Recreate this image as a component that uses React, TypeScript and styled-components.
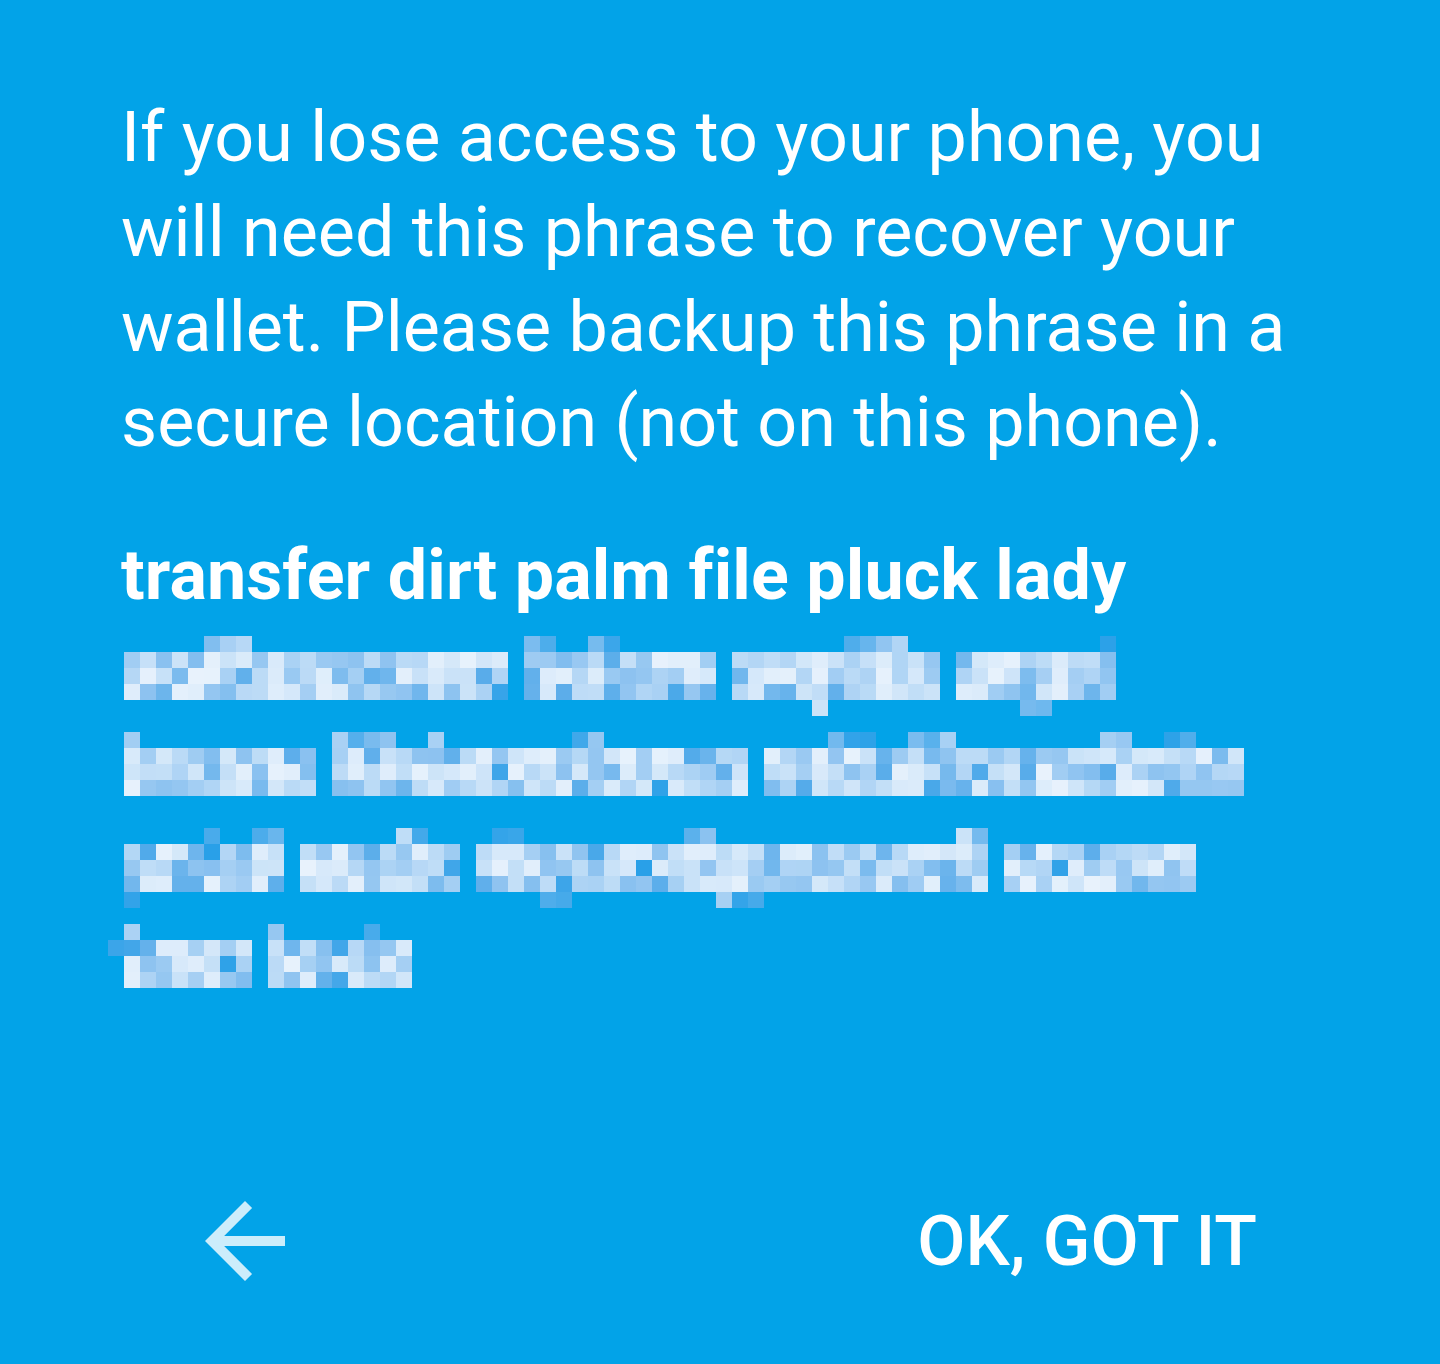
import React from "react";
import styled, { createGlobalStyle } from "styled-components";

const GlobalStyle = createGlobalStyle`
  html, body { margin: 0; padding: 0; background: #02a3e8; }
  * { box-sizing: border-box; }
`;

const Page = styled.div`
  min-height: 1364px;
  display: flex;
  flex-direction: column;
  background: #02a3e8;
  color: #ffffff;
  font-family: Roboto, "Noto Sans", "Liberation Sans", sans-serif;
`;

const Content = styled.main`
  flex: 1;
  padding: 90px 111px 0 121px;
`;

const Intro = styled.p`
  margin: 0;
  font-size: 70px;
  line-height: 95px;
  font-weight: 400;
`;

const Phrase = styled.section`
  margin-top: 57px;
`;

const PhraseLine = styled.p`
  margin: 0;
  font-size: 70px;
  line-height: 96px;
  font-weight: 700;
  letter-spacing: 0.1px;
`;

const Mosaic = styled.svg`
  display: block;
  margin-left: -13px;
  width: 1168px;
  height: 380px;
  shape-rendering: crispEdges;
`;

const Footer = styled.footer`
  display: flex;
  justify-content: space-between;
  align-items: center;
  padding: 0 183px 63px 185px;
`;

const BackButton = styled.button`
  width: 120px;
  height: 120px;
  padding: 0;
  border: none;
  background: transparent;
  display: flex;
  align-items: center;
  justify-content: center;
  cursor: pointer;
`;

const OkButton = styled.button`
  border: none;
  background: transparent;
  padding: 0;
  color: #ffffff;
  font-family: Roboto, "Noto Sans", "Liberation Sans", sans-serif;
  font-size: 70px;
  line-height: 82px;
  font-weight: 500;
  cursor: pointer;
`;

/* ---------- mosaic (pixelated hidden words) ---------- */

type MosaicLine = {
  main: [number, number][];
  asc: number[];
  desc: number[];
  partial?: number[]; // cells only in first main row
};

const LINES: MosaicLine[] = [
  {
    main: [
      [0, 24],
      [25, 37],
      [38, 51],
      [52, 62],
    ],
    asc: [5, 6, 7, 25, 26, 29, 30, 45, 46, 47, 48, 61],
    desc: [43, 56, 57],
  },
  {
    main: [
      [0, 12],
      [13, 39],
      [40, 70],
    ],
    asc: [0, 13, 14, 15, 16, 19, 28, 29, 44, 45, 46, 49, 50, 51, 61, 62, 65, 66],
    desc: [],
  },
  {
    main: [
      [0, 10],
      [11, 21],
      [22, 54],
      [55, 67],
    ],
    asc: [5, 8, 9, 17, 18, 23, 24, 35, 36, 52, 53],
    desc: [0, 26, 27, 37, 38, 39],
  },
  {
    main: [
      [0, 8],
      [9, 18],
    ],
    asc: [0, 9, 15],
    desc: [],
    partial: [-1],
  },
];

function mulberry32(seed: number) {
  let a = seed;
  return () => {
    a |= 0;
    a = (a + 0x6d2b79f5) | 0;
    let t = Math.imul(a ^ (a >>> 15), 1 | a);
    t = (t + Math.imul(t ^ (t >>> 7), 61 | t)) ^ t;
    return ((t ^ (t >>> 14)) >>> 0) / 4294967296;
  };
}

type RGB = [number, number, number];
const LIGHT: RGB = [232, 242, 252];
const MID: RGB = [140, 194, 240];
const DEEP: RGB = [88, 172, 234];
const EDGE: RGB = [40, 160, 232];

const mix = (a: RGB, b: RGB, t: number) =>
  `rgb(${Math.round(a[0] + (b[0] - a[0]) * t)},${Math.round(
    a[1] + (b[1] - a[1]) * t
  )},${Math.round(a[2] + (b[2] - a[2]) * t)})`;

type Cell = { x: number; y: number; fill: string };

function buildCells(): Cell[] {
  const rnd = mulberry32(20240611);
  const cells: Cell[] = [];
  const colX = (i: number) => (i + 1) * 16;
  const rowY = (line: number, r: number) => 13 + line * 96 + r * 16;

  const mainColor = () => {
    const p = rnd();
    if (p < 0.12) return mix(MID, DEEP, rnd());
    if (p < 0.16) return mix(DEEP, EDGE, rnd());
    return mix(LIGHT, MID, Math.pow(rnd(), 1.1));
  };
  const edgeColor = () => {
    const p = rnd();
    if (p < 0.35) return mix(LIGHT, MID, 0.3 + rnd() * 0.7);
    return mix(MID, EDGE, rnd());
  };

  LINES.forEach((ln, li) => {
    ln.asc.forEach((c) =>
      cells.push({ x: colX(c), y: rowY(li, 0), fill: edgeColor() })
    );
    ln.main.forEach(([s, e]) => {
      for (let r = 1; r <= 3; r++) {
        for (let c = s; c < e; c++) {
          cells.push({ x: colX(c), y: rowY(li, r), fill: mainColor() });
        }
      }
    });
    ln.desc.forEach((c) =>
      cells.push({ x: colX(c), y: rowY(li, 4), fill: edgeColor() })
    );
    (ln.partial || []).forEach((c) =>
      cells.push({ x: colX(c), y: rowY(li, 1), fill: mix(DEEP, EDGE, 0.6) })
    );
  });
  return cells;
}

const CELLS = buildCells();

function HiddenWords() {
  return (
    <Mosaic viewBox="0 0 1168 380" aria-label="hidden recovery words">
      {CELLS.map((c, i) => (
        <rect key={i} x={c.x} y={c.y} width={16} height={16} fill={c.fill} />
      ))}
    </Mosaic>
  );
}

function ArrowBack() {
  return (
    <svg width="120" height="120" viewBox="0 0 24 24" aria-hidden="true">
      <path
        d="M20 11H7.83l5.59-5.59L12 4l-8 8 8 8 1.41-1.41L7.83 13H20v-2z"
        fill="#ffffff"
        fillOpacity={0.8}
      />
    </svg>
  );
}

export default function App() {
  return (
    <>
      <GlobalStyle />
      <Page>
        <Content>
          <Intro>
            If you lose access to your phone, you will need this phrase to
            recover your wallet. Please backup this phrase in a secure location
            (not on this phone).
          </Intro>
          <Phrase>
            <PhraseLine>transfer dirt palm file pluck lady</PhraseLine>
            <HiddenWords />
          </Phrase>
        </Content>
        <Footer>
          <BackButton aria-label="Back">
            <ArrowBack />
          </BackButton>
          <OkButton>OK, GOT IT</OkButton>
        </Footer>
      </Page>
    </>
  );
}
